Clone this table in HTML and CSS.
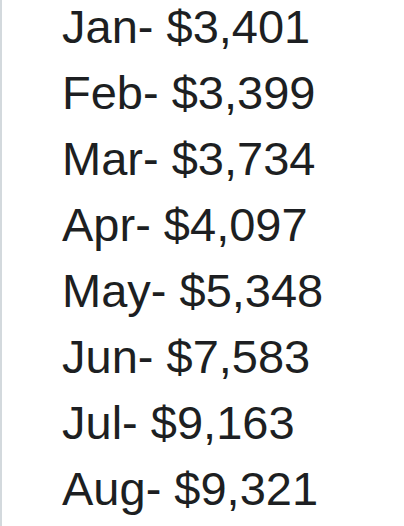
FILE: index.html
```html
<!DOCTYPE html>
<html>
<head>
<meta charset="utf-8">
<link rel="stylesheet" href="styles.css">
</head>
<body>
<div class="panel">
  <ul class="sales">
    <li>Jan- $3,401</li>
    <li>Feb- $3,399</li>
    <li>Mar- $3,734</li>
    <li>Apr- $4,097</li>
    <li>May- $5,348</li>
    <li>Jun- $7,583</li>
    <li>Jul- $9,163</li>
    <li>Aug- $9,321</li>
  </ul>
</div>
</body>
</html>
```

FILE: styles.css
```css
html, body {
  margin: 0;
  padding: 0;
  background: #ffffff;
}
.panel {
  height: 526px;
  border-left: 2px solid #d3d9dd;
  box-sizing: border-box;
  padding-left: 60px;
}
.sales {
  list-style: none;
  margin: 0;
  padding: 0;
  display: flex;
  flex-direction: column;
  gap: 12px;
  font-family: "Liberation Sans", Arial, sans-serif;
  font-size: 47px;
  line-height: 54px;
  color: #1d1f22;
}
```
